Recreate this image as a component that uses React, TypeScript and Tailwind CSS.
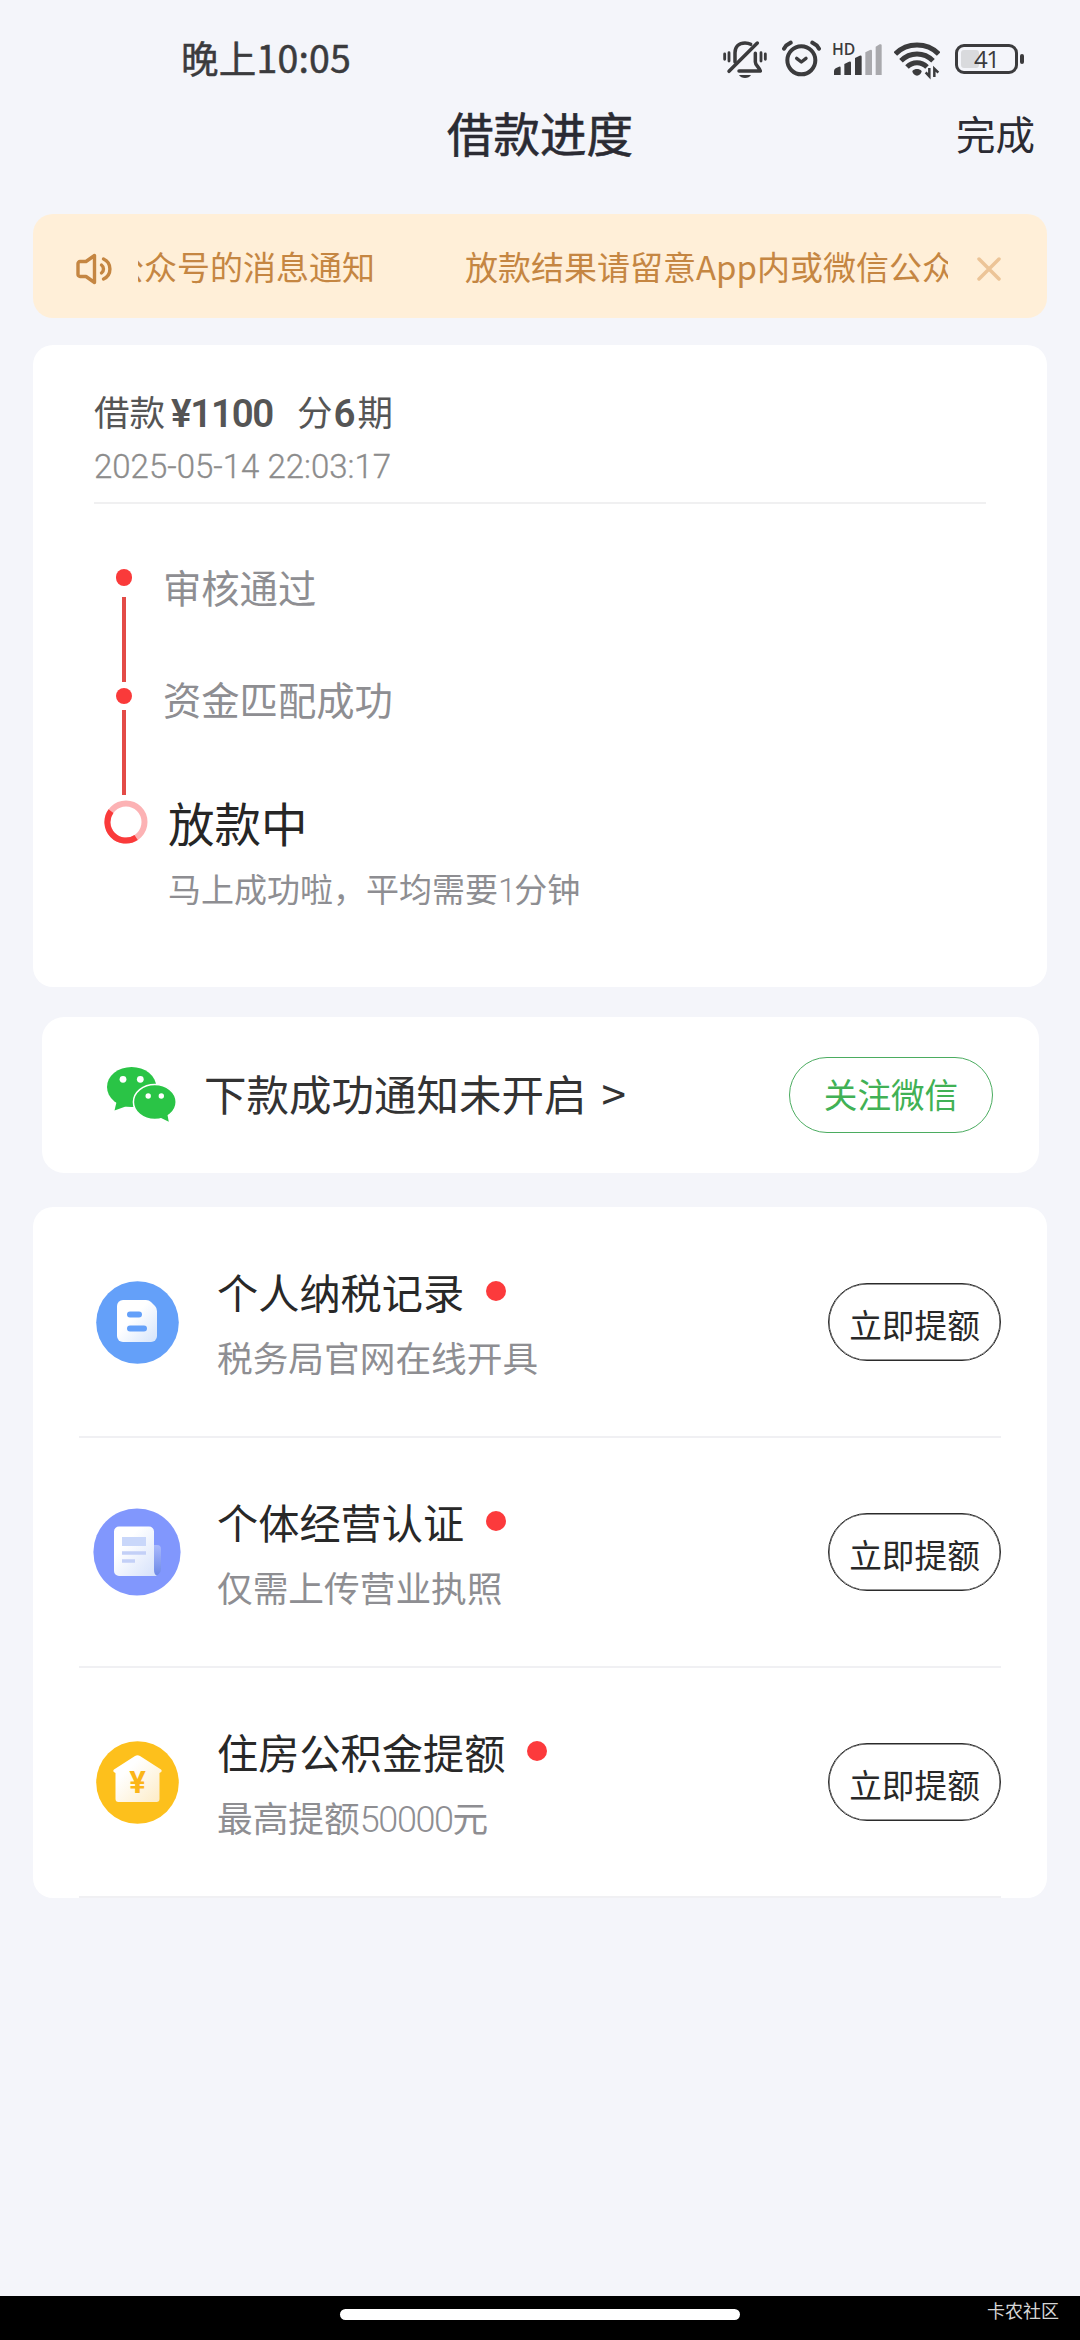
import type { ReactNode } from 'react';

interface Offer {
  id: number;
  title: string;
  subtitle: ReactNode;
  icon: ReactNode;
}

function StatusBar() {
  return (
    <div className="mt-8 flex h-14 items-center pr-[56px] pl-[181px] text-[#3b3b3d]">
      <span className="pb-[6px] text-[37.500px] leading-[44px] tracking-[0.200px] [-webkit-text-stroke:0.500px_currentColor]">晚上10:05</span>
      <div className="ml-auto flex h-10">
        {/* muted bell */}
        <svg className="h-10 w-[44px]" viewBox="66 60 132 120" fill="none" stroke="currentColor" strokeWidth="10.500" strokeLinecap="round" strokeLinejoin="round">
          <path d="M102 126V98c0-18 12-29 30-29 7 0 12 1 17 4" />
          <path d="M163 100v26c0 10 12 16 15 27h-64" />
          <path d="M84 154L169 69" />
          <path d="M114 165c6 12 30 12 36 0z" fill="currentColor" stroke="none" />
          <path d="M71 102v16M84 98v25M180 98v25M193 102v16" strokeWidth="8.500" />
        </svg>
        {/* alarm */}
        <svg className="ml-[15px] h-10 w-[39px]" viewBox="243 60 117 120" fill="none" stroke="currentColor" strokeWidth="12" strokeLinecap="round" strokeLinejoin="round">
          <circle cx="301" cy="121" r="42" />
          <path d="M287 115l14 11 14-11" strokeWidth="10" />
          <path d="M249 86c4-7 11-14 20-18M354 86c-4-7-11-14-20-18" />
        </svg>
        {/* signal */}
        <svg className="ml-[11px] h-10 w-[50px] overflow-visible" viewBox="394 60 150 120" fill="currentColor">
          <text x="394" y="106" fontFamily="Open Sans, sans-serif" fontSize="46" fontWeight="600" textLength="70" lengthAdjust="spacingAndGlyphs">HD</text>
          <path d="M400 153q0-5 5-8l10-5q5-2 5 3v22h-20zM431 132l14-7q6-2 6 3v37h-20zM463 114l14-7q6-2 6 3v55h-20z" />
          <path d="M494 97l14-7q6-2 6 3v72h-20zM525 80l12-7q6-2 6 3v89h-18z" fill="#a9a9ad" />
        </svg>
        {/* wifi */}
        <svg className="ml-[12px] h-10 w-[46px]" viewBox="582 60 138 120" fill="none" stroke="currentColor" strokeWidth="15">
          <path d="M586 102c35-36 95-36 130 0" />
          <path d="M603 122c27-27 69-27 96 0" />
          <path d="M621 141c17-17 43-17 60 0" />
          <path d="M637 153c8-8 20-8 28 0 0 7-8 14-14 14s-14-7-14-14z" fill="currentColor" stroke="none" />
          <path d="M688 144v25l-11-12M703 171v-25l12 12" strokeWidth="7.500" />
        </svg>
        {/* battery */}
        <div className="ml-[15px] flex items-center pb-[2px]">
          <div className="flex h-[30px] w-[63px] rounded-[9px] border-[3px] border-current p-[3px]">
            <div className="flex w-[18px] items-center rounded-[3px] bg-[#d9dadd]">
              <span className="pl-[13px] font-['Open_Sans'] text-[24px] leading-none tracking-[-1.500px]">41</span>
            </div>
          </div>
          <div className="ml-[2px] h-[10px] w-[4px] rounded-sm bg-current" />
        </div>
      </div>
    </div>
  );
}

function Header() {
  return (
    <div className="grid h-[86px] grid-cols-3 items-center px-[45px] text-[#2b2b33]">
      <span />
      <h1 className="pt-[1px] text-center text-[46.500px] leading-[56px] [-webkit-text-stroke:0.600px_currentColor]">借款进度</h1>
      <button className="pt-[3px] text-right text-[39.500px] leading-[48px]">完成</button>
    </div>
  );
}

function Notice() {
  return (
    <div className="mx-[33px] mt-10 flex h-[104px] items-center rounded-[20px] bg-[#ffefd8] pr-[46px] pl-[43px] text-[#c58642]">
      <svg className="mt-[6px] h-8 w-[38px] shrink-0" viewBox="0 0 38 32" fill="none" stroke="currentColor" strokeWidth="3.400" strokeLinecap="round" strokeLinejoin="round">
        <path d="M4 8.500h6L18.500 2.500v27L10 23.500H4a2 2 0 0 1-2-2v-11a2 2 0 0 1 2-2z" />
        <path d="M25.500 12a5 5 0 0 1 0 8M27.500 6a11 11 0 0 1 0 20" />
      </svg>
      <div className="ml-[24px] flex w-[810px] justify-end overflow-hidden text-[33px] leading-[44px] whitespace-nowrap">
        <span className="mr-[90px]">放款结果请留意App内或微信公众号的消息通知</span>
        <span className="-mr-[7px]">放款结果请留意App内或微信公众</span>
      </div>
      <svg className="mt-[6px] ml-auto h-6 w-6 shrink-0" viewBox="0 0 24 24" stroke="#ecc497" strokeWidth="3.500" strokeLinecap="round">
        <path d="M2 2l20 20M22 2L2 22" />
      </svg>
    </div>
  );
}

function Progress() {
  return (
    <div className="mx-[33px] mt-[27px] h-[642px] rounded-[20px] bg-white px-[61px] pt-[46px]">
      <div className="flex h-10 items-center text-[35.500px] leading-10 text-[#555]">
        <span>借款</span>
        <span className="ml-[6px] pt-[5px] font-['Roboto'] text-[38.500px] font-semibold tracking-[-1.300px]">¥1100</span>
        <span className="ml-[24px]">分</span>
        <span className="ml-[1px] pt-[5px] font-['Roboto'] text-[38.500px] font-semibold tracking-[-1px]">6</span>
        <span className="ml-[3px]">期</span>
      </div>
      <p className="mt-4 font-['Roboto'] text-[33px] leading-10 font-light text-[#8c8c8c] [-webkit-text-stroke:0.300px_currentColor]">
        2025-05-14 22:03:17
      </p>
      <div className="mt-[15px] h-[2px] bg-[#f0f0f1]" />
      <div className="flex">
        <div className="flex w-[60px] flex-col items-center pt-[65px]">
          <span className="h-[17px] w-4 rounded-full bg-[#fa3a3a]" />
          <span className="mt-[11px] h-[85px] w-1 bg-[#e34b47]" />
          <span className="mt-[6px] h-4 w-4 rounded-full bg-[#fa3a3a]" />
          <span className="mt-[6px] h-[85px] w-1 bg-[#e34b47]" />
          <svg className="mt-[5px] ml-1 h-[44px] w-[44px]" viewBox="-22 -22 44 44" fill="none" strokeWidth="6">
            <circle r="18.500" stroke="#fcb2b4" />
            <path d="M10.100 15.500A18.500 18.500 0 0 1-15-10.900" stroke="#fa3a3a" />
          </svg>
        </div>
        <div className="flex flex-col pt-[63px] pl-[9px] text-[38.300px] text-[#8e8e92]">
          <span className="leading-10">审核通过</span>
          <span className="mt-[72px] leading-10">资金匹配成功</span>
          <span className="mt-[79px] ml-[5px] text-[46.500px] leading-[48px] text-[#262626]">放款中</span>
          <span className="mt-[22px] ml-[5px] text-[33px] leading-10">
            马上成功啦，平均需要<span className="font-['Roboto'] font-light tracking-[-2px]">1</span>分钟
          </span>
        </div>
      </div>
    </div>
  );
}

function WechatBar() {
  return (
    <div className="mr-[41px] ml-[42px] mt-[30px] flex h-[156px] items-center rounded-[22px] bg-white pr-[46px] pl-[65px]">
      <svg className="h-14 w-[69px]" viewBox="0 0 69 56" fill="#2ac446">
        <ellipse cx="24.600" cy="20" rx="24.600" ry="20" />
        <path d="M10 33L7.500 43.500L20 39z" />
        <ellipse cx="47.800" cy="35" rx="21.400" ry="17.600" stroke="#fff" strokeWidth="1.500" />
        <path d="M53 50.500L61.800 54.700L60.300 47z" />
        <g fill="#fff">
          <circle cx="16" cy="12.300" r="3.400" />
          <circle cx="33.300" cy="12.300" r="3.400" />
          <circle cx="41.200" cy="29" r="2.700" />
          <circle cx="54.300" cy="29" r="2.700" />
        </g>
      </svg>
      <span className="ml-[28px] pb-[6px] text-[42.500px] leading-[52px] text-[#333]">
        下款成功通知未开启<span className="ml-[15px] text-[44px]">&gt;</span>
      </span>
      <button className="ml-auto h-[76px] w-[204px] rounded-full border border-[#4bac60] pb-[3px] text-[33.600px] leading-[44px] text-[#41b155]">
        关注微信
      </button>
    </div>
  );
}

const offers: Offer[] = [
  {
    id: 1,
    title: '个人纳税记录',
    subtitle: '税务局官网在线开具',
    icon: (
      <svg className="h-[83px] w-[83px]" viewBox="0 0 83 83">
        <defs>
          <linearGradient id="tax" x1="0" y1="0" x2="1" y2="1">
            <stop offset="0.400" stopColor="#fff" />
            <stop offset="1" stopColor="#d5e4fb" />
          </linearGradient>
        </defs>
        <circle cx="41.500" cy="41.500" r="41.300" fill="#64a0f9" />
        <path d="M27 19h23q3 0 5 2l4 4q2 2 2 5v25a6 6 0 0 1-6 6H27a6 6 0 0 1-6-6V25a6 6 0 0 1 6-6z" fill="url(#tax)" />
        <path d="M34 33.500h9M34 47.500h14" stroke="#64a0f9" strokeWidth="6" strokeLinecap="round" />
      </svg>
    )
  },
  {
    id: 2,
    title: '个体经营认证',
    subtitle: '仅需上传营业执照',
    icon: (
      <svg className="h-[88px] w-[88px]" viewBox="0 0 88 88">
        <defs>
          <linearGradient id="biz" x1="0" y1="0" x2="1" y2="1">
            <stop offset="0.300" stopColor="#fff" />
            <stop offset="1" stopColor="#d4e0fa" />
          </linearGradient>
          <linearGradient id="fold" x1="0" y1="0" x2="0" y2="1">
            <stop offset="0" stopColor="#a9b9fc" />
            <stop offset="1" stopColor="#6c88e6" />
          </linearGradient>
        </defs>
        <circle cx="44" cy="44" r="43.600" fill="#8197fd" />
        <path d="M60 37h4a4 4 0 0 1 4 4v20a7 7 0 0 1-8 7z" fill="url(#fold)" />
        <path d="M26 18.500h30a5 5 0 0 1 5 5V62c0 3 1 5 3 6H26a5 5 0 0 1-5-5V23.500a5 5 0 0 1 5-5z" fill="url(#biz)" />
        <path d="M29 29h24v9H29z" fill="#c9d7fa" />
        <path d="M29 45h24M29 53h13" stroke="#c3d0f7" strokeWidth="3.500" />
      </svg>
    )
  },
  {
    id: 3,
    title: '住房公积金提额',
    subtitle: (
      <>
        最高提额<span className="font-['Roboto'] text-[36px] font-light tracking-[-1.400px]">50000</span>元
      </>
    ),
    icon: (
      <svg className="h-[83px] w-[83px]" viewBox="0 0 83 83">
        <defs>
          <linearGradient id="house" x1="0" y1="0" x2="1" y2="1">
            <stop offset="0.300" stopColor="#fff" />
            <stop offset="1" stopColor="#fdebc4" />
          </linearGradient>
        </defs>
        <circle cx="41.500" cy="41.500" r="41.300" fill="#fdc01c" />
        <path d="M39 15q2.500-1.500 5 0L65 28.500q2 2.500-1.500 3.500V58a3 3 0 0 1-3 3h-38a3 3 0 0 1-3-3V32q-3.500-1-1.500-3.500z" fill="url(#house)" />
        <text x="41.500" y="51.500" textAnchor="middle" fontFamily="Roboto, sans-serif" fontSize="31" fontWeight="700" fill="#fbb518">¥</text>
      </svg>
    )
  }
];

export default function App() {
  return (
    <div className="relative flex h-[2340px] w-[1080px] flex-col overflow-hidden bg-[#f4f5fa] font-['Noto_Sans_CJK_SC',sans-serif]">
      <StatusBar />
      <Header />
      <Notice />
      <Progress />
      <WechatBar />
      <div className="mx-[33px] mt-[34px] flex h-[691px] flex-col rounded-[20px] bg-white px-[46px] pt-[1px]">
        {offers.map((offer) => (
          <div key={offer.id} className="flex flex-1 items-center border-b-2 border-[#f0f0f3]">
            <div className="flex w-[116px] justify-center">{offer.icon}</div>
            <div className="ml-[22px]">
              <div className="flex h-12 items-center">
                <h2 className="text-[41.200px] leading-[48px] text-[#282828]">{offer.title}</h2>
                <span className="ml-[22px] h-5 w-5 rounded-full bg-[#fc3a3c]" />
              </div>
              <p className="mt-[22px] h-10 text-[35.700px] leading-10 text-[#8e8e92]">{offer.subtitle}</p>
            </div>
            <button className="ml-auto h-[78px] w-[173px] rounded-full border border-[#2b2b2b] pt-[3px] text-[32.700px] leading-[44px] text-[#282828] shadow-[inset_0_0_0_0.500px_#2b2b2b]">
              立即提额
            </button>
          </div>
        ))}
      </div>
      <div className="mt-auto flex h-11 justify-center bg-black pt-[13px]">
        <div className="h-[11px] w-[400px] rounded-full bg-white" />
      </div>
      <span className="absolute right-[21px] bottom-[18px] text-[18px] leading-6 text-[#d6d6d6]">卡农社区</span>
    </div>
  );
}
